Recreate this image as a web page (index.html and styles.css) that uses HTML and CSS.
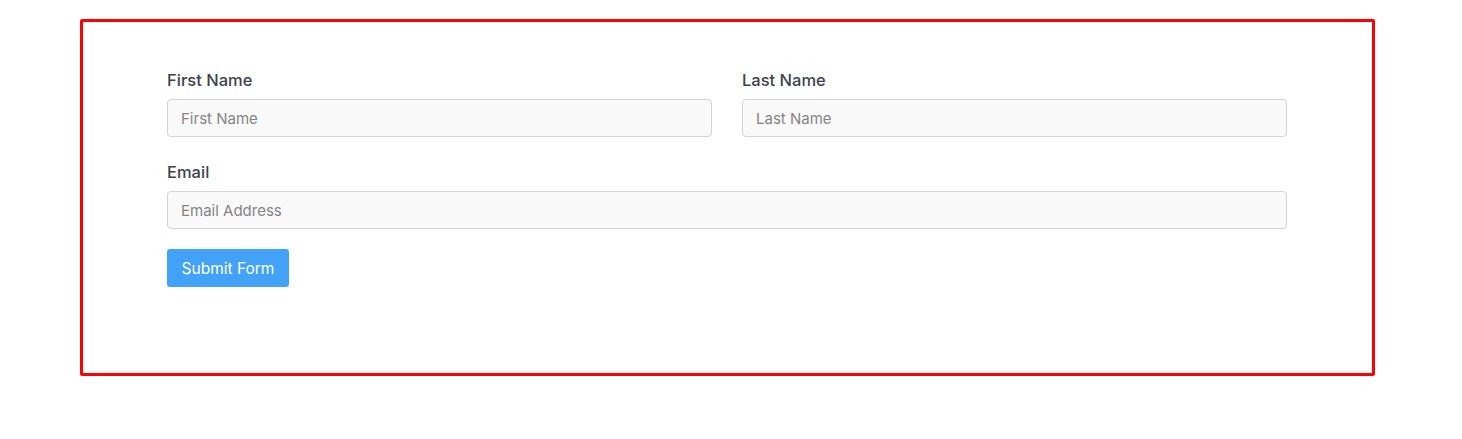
FILE: index.html
```html
<!DOCTYPE html>
<html lang="en">
<head>
<meta charset="utf-8">
<title>Form</title>
<link rel="stylesheet" href="styles.css">
</head>
<body>
<div class="frame">
  <form class="form">
    <div class="row">
      <div class="group">
        <label class="label" for="fn">First Name</label>
        <input class="input" id="fn" type="text" placeholder="First Name">
      </div>
      <div class="group">
        <label class="label" for="ln">Last Name</label>
        <input class="input" id="ln" type="text" placeholder="Last Name">
      </div>
    </div>
    <div class="group email">
      <label class="label" for="em">Email</label>
      <input class="input" id="em" type="email" placeholder="Email Address">
    </div>
    <button class="btn" type="button">Submit Form</button>
  </form>
</div>
</body>
</html>
```
FILE: styles.css
```css
* { box-sizing: border-box; }
html, body { margin: 0; padding: 0; background: #fff; }
body {
  font-family: Inter, "Noto Sans", sans-serif;
  padding: 19px 0 0 80px;
}
.frame {
  width: 1295px;
  height: 357px;
  border: 3px solid #ff0000;
  border-radius: 2px;
  padding: 46px 0 0 84px;
}
.form { width: 1120px; }
.row {
  display: grid;
  grid-template-columns: 1fr 1fr;
  gap: 30px;
}
.group { display: flex; flex-direction: column; margin-bottom: 23px; }
.group.email { margin-bottom: 20px; }
.label {
  font-size: 16.5px;
  font-weight: 500;
  line-height: 24px;
  color: #423f4c;
  margin-bottom: 7px;
}
.input {
  height: 38px;
  border: 1px solid #d4d4d4;
  border-radius: 4px;
  background: #f9f9f9;
  padding: 0 13px;
  font-family: inherit;
  font-size: 15px;
  color: #495057;
}
.input::placeholder { color: #858585; }
.btn {
  display: block;
  height: 38px;
  width: 122px;
  border: 0;
  border-radius: 3px;
  background: #42a2f8;
  color: #fff;
  font-family: inherit;
  font-size: 15.5px;
  padding: 0;
}
```
